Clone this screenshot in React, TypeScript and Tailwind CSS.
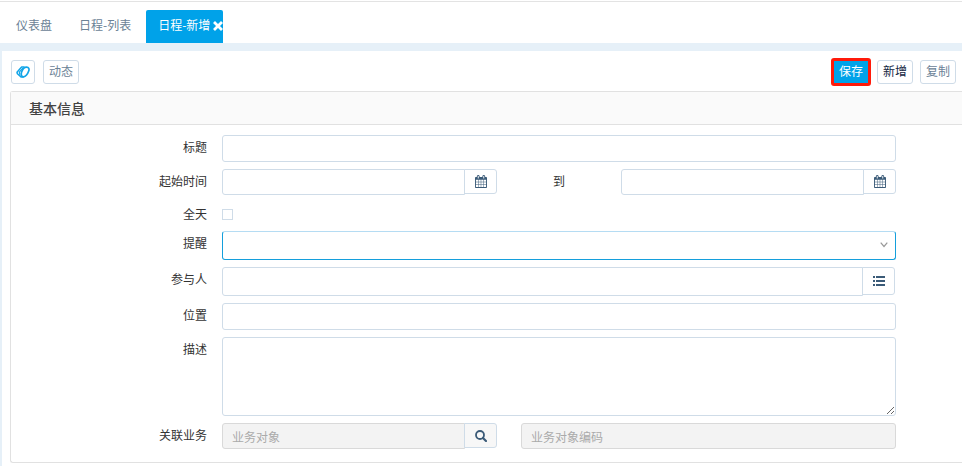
import type { ReactNode } from "react";

const inputClass = "w-full min-w-0 rounded-[3px] border border-[#cfdce8] bg-white px-2 text-xs text-[#333] outline-none";
const disabledClass =
  "w-full min-w-0 rounded-[3px] border border-[#d9d9d9] bg-[#f3f3f3] px-[9px] text-xs text-[#333] placeholder:text-[#aaa] outline-none";
const addonClass = "flex w-[33px] shrink-0 -ml-px items-center justify-center rounded-r-[3px] border border-[#cfdce8] text-[#3b5b78]";
const toolClass = "h-6 rounded-[3px] border border-[#cfdce8] px-[5px] pb-0.5 text-xs leading-5";

const CalendarIcon = () => (
  <svg viewBox="0 0 1664 1792" className="h-[13px] w-3" fill="currentColor" aria-hidden="true">
    <path d="M128 1664h288v-288h-288v288zm352 0h320v-288h-320v288zm-352-352h288v-320h-288v320zm352 0h320v-320h-320v320zm-352-384h288v-288h-288v288zm736 736h320v-288h-320v288zm-384-736h320v-288h-320v288zm768 736h288v-288h-288v288zm-384-352h320v-320h-320v320zm-352-864v-288q0-13-9.500-22.500t-22.500-9.500h-64q-13 0-22.500 9.500t-9.500 22.500v288q0 13 9.500 22.500t22.500 9.500h64q13 0 22.500-9.500t9.500-22.500zm736 864h288v-320h-288v320zm-384-384h320v-288h-320v288zm384 0h288v-288h-288v288zm32-480v-288q0-13-9.500-22.500t-22.500-9.500h-64q-13 0-22.500 9.500t-9.500 22.500v288q0 13 9.500 22.500t22.500 9.500h64q13 0 22.500-9.500t9.500-22.500zm384-64v1280q0 52-38 90t-90 38h-1408q-52 0-90-38t-38-90v-1280q0-52 38-90t90-38h128v-96q0-66 47-113t113-47h64q66 0 113 47t47 113v96h384v-96q0-66 47-113t113-47h64q66 0 113 47t47 113v96h128q52 0 90 38t38 90z" />
  </svg>
);

const ListIcon = () => (
  <svg viewBox="0 0 12 10" className="h-[10px] w-3" fill="currentColor" aria-hidden="true">
    <path d="M0 0h2v2H0zM3 0h9v2H3zM0 4h2v2H0zM3 4h9v2H3zM0 8h2v2H0zM3 8h9v2H3z" />
  </svg>
);

const SearchIcon = () => (
  <svg viewBox="0 0 12 12" className="h-3 w-3" fill="none" stroke="currentColor" aria-hidden="true">
    <circle cx="5" cy="5" r="4" strokeWidth="1.800" />
    <path d="M8 8l3 3" strokeWidth="2.200" strokeLinecap="round" />
  </svg>
);

const CloseIcon = () => (
  <svg viewBox="0 0 10 10" className="h-[10px] w-[10px]" fill="none" stroke="currentColor" aria-hidden="true">
    <path d="M2 2l6 6M8 2l-6 6" strokeWidth="2.800" strokeLinecap="square" />
  </svg>
);

const LogoIcon = () => (
  <svg viewBox="0 0 14 12" className="h-3 w-[14px]" fill="none" stroke="#12a5e8" strokeLinecap="round" strokeLinejoin="round" aria-hidden="true">
    <path d="M5.600 6C6.600 3.200 8.400 1.200 10.600 1.200C12.800 1.200 13.500 2.800 12.700 5C11.700 7.800 9.800 10.600 7.600 10.800C5.400 11 4.800 8.500 5.600 6Z" strokeWidth="1.700" />
    <path d="M8 1H5.600L1 6.200L1.400 7.800L5 10.900H7" strokeWidth="1.500" />
    <path d="M6.600 2.400L3.300 6.200L3.800 8.400" strokeWidth="1.200" />
  </svg>
);

type FieldProps = { label: string; htmlFor: string; children: ReactNode };

const Field = ({ label, htmlFor, children }: FieldProps) => (
  <div className="flex items-start">
    <label htmlFor={htmlFor} className="w-[196px] shrink-0 text-right text-xs leading-6 text-[#333]">
      {label}
    </label>
    <div className="ml-[15px] min-w-0 flex-1">{children}</div>
  </div>
);

const DateInput = ({ id, label }: { id: string; label: string }) => (
  <div className="flex min-w-0 flex-1 items-start">
    <input id={id} type="text" aria-label={label} className={`${inputClass} h-[26px] rounded-r-none`} />
    <button type="button" aria-label="选择日期" className={`${addonClass} h-[25px]`}>
      <CalendarIcon />
    </button>
  </div>
);

const App = () => {
  return (
    <div className="min-h-screen bg-[#e6f0f8] font-['Noto_Sans_CJK_SC',sans-serif] text-xs">
      {/* Tabs */}
      <div className="bg-white pt-px">
        <nav className="flex gap-[3px] border-t border-[#e3e3e3] pt-2 pl-1 leading-[30px] text-[#6b8296]">
          <a href="#dashboard" className="h-[33px] px-3">仪表盘</a>
          <a href="#list" className="h-[33px] px-3">日程-列表</a>
          <div className="flex h-[33px] items-start gap-[3px] rounded-t-[2px] bg-[#00a2e9] pl-3 text-white">
            <a href="#new">日程-新增</a>
            <button type="button" aria-label="关闭" className="flex h-8 items-center">
              <CloseIcon />
            </button>
          </div>
        </nav>
      </div>

      <main className="mt-2 ml-0.5 min-h-[calc(100vh-51px)] bg-white pt-[7px] pl-2">
        {/* Toolbar */}
        <div className="flex items-center justify-between pr-1.5 pl-px">
          <div className="flex gap-2">
            <button type="button" aria-label="刷新" className="flex h-6 w-6 items-center justify-center rounded-[3px] border border-[#cfdce8]">
              <LogoIcon />
            </button>
            <button type="button" className={`${toolClass} text-[#6b8296]`}>动态</button>
          </div>
          <div className="flex items-center gap-[7px]">
            <button type="button" className="-mr-px h-7 w-10 rounded-[3px] border-3 border-[#ff1a0a] bg-[#00a2e9] pb-0.5 text-xs leading-5 text-white">
              保存
            </button>
            <button type="button" className={`${toolClass} text-[#12263f]`}>新增</button>
            <button type="button" className={`${toolClass} text-[#6b8296]`}>复制</button>
          </div>
        </div>

        {/* Basic info */}
        <section className="mt-[5px] rounded-l-[3px] border-y border-l border-[#e1e1e1]">
          <h2 className="border-b border-[#e1e1e1] bg-[#fafafa] pl-[18px] text-sm leading-8 font-medium text-[#444]">基本信息</h2>
          <form className="flex flex-col gap-[7px] pt-[10px] pr-[66px] pb-[13px]">
            <Field label="标题" htmlFor="title">
              <input id="title" type="text" className={`${inputClass} block h-[27px]`} />
            </Field>
            <Field label="起始时间" htmlFor="start">
              <div className="flex items-start">
                <DateInput id="start" label="起始时间" />
                <span className="w-[124px] text-center leading-6 text-[#333]">到</span>
                <DateInput id="end" label="结束时间" />
              </div>
            </Field>
            <div className="flex h-[22px] items-end">
              <label htmlFor="allday" className="w-[196px] shrink-0 text-right leading-5 text-[#333]">全天</label>
              <input id="allday" type="checkbox" className="mb-1 ml-[15px] h-[11px] w-[11px] appearance-none border border-[#cfdce8] checked:bg-[#00a2e9]" />
            </div>
            <Field label="提醒" htmlFor="remind">
              <div className="relative">
                <select
                  id="remind"
                  className="block h-[29px] w-full appearance-none rounded-[3px] border border-[#149fdc] border-t-[#b5dcf3] bg-white px-2 text-xs outline-none"
                >
                  <option value=""></option>
                </select>
                <svg viewBox="0 0 8 6" className="pointer-events-none absolute top-[11px] right-2 h-1.5 w-2" fill="none" stroke="#999" strokeWidth="1.200" aria-hidden="true">
                  <path d="M0.700 0.700L4 4.500L7.300 0.700" />
                </svg>
              </div>
            </Field>
            <Field label="参与人" htmlFor="people">
              <div className="flex items-start pr-px">
                <input id="people" type="text" className={`${inputClass} h-[29px] rounded-r-none`} />
                <button type="button" aria-label="选择参与人" className={`${addonClass} h-7`}>
                  <ListIcon />
                </button>
              </div>
            </Field>
            <Field label="位置" htmlFor="place">
              <input id="place" type="text" className={`${inputClass} block h-[27px]`} />
            </Field>
            <Field label="描述" htmlFor="desc">
              <textarea id="desc" className={`${inputClass} block h-[79px] resize-y`} />
            </Field>
            <Field label="关联业务" htmlFor="biz">
              <div className="grid grid-cols-[11fr_15fr] gap-6">
                <div className="flex items-start">
                  <input id="biz" type="text" disabled placeholder="业务对象" className={`${disabledClass} h-[26px] rounded-r-none`} />
                  <button type="button" aria-label="搜索" className={`${addonClass} h-[25px] bg-[#f7f7f7]`}>
                    <SearchIcon />
                  </button>
                </div>
                <input type="text" disabled aria-label="业务对象编码" placeholder="业务对象编码" className={`${disabledClass} h-[26px]`} />
              </div>
            </Field>
          </form>
        </section>
      </main>
    </div>
  );
};

export default App;
